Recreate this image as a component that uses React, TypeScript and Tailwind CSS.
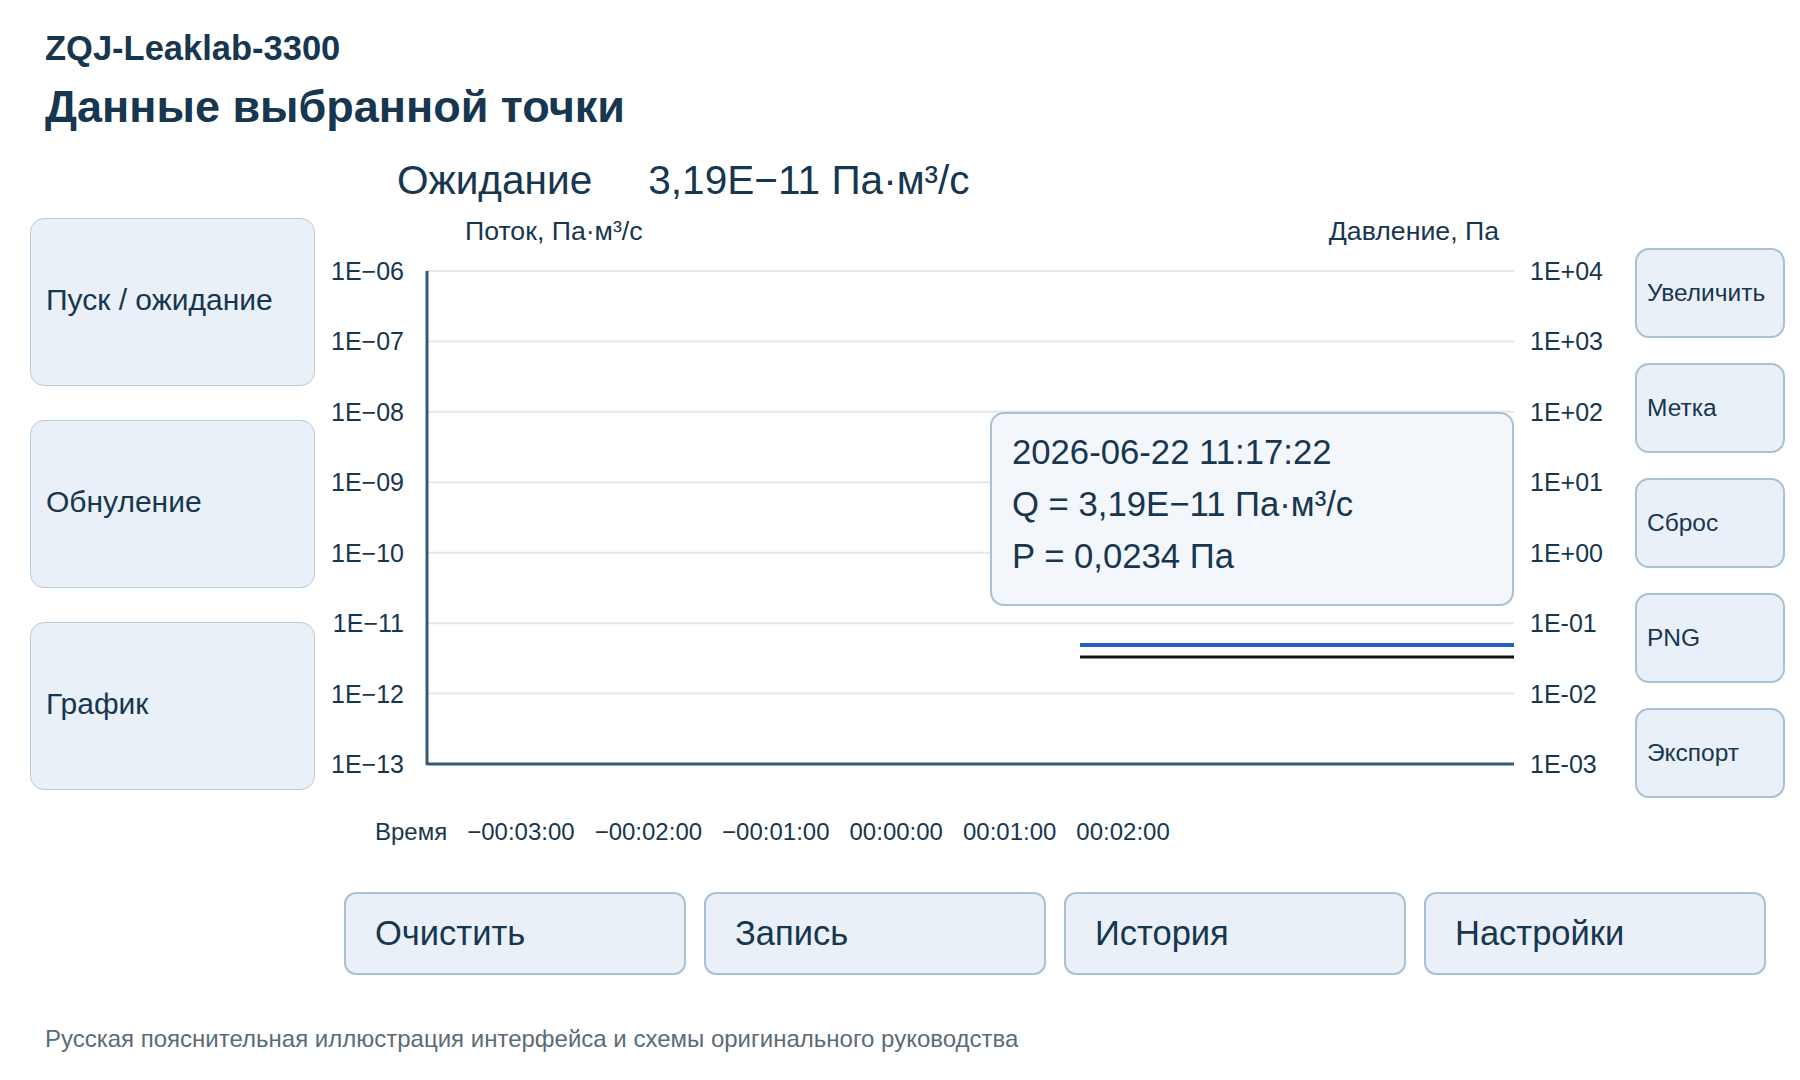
const leftTicks = ["1E−06", "1E−07", "1E−08", "1E−09", "1E−10", "1E−11", "1E−12", "1E−13"];
const rightTicks = ["1E+04", "1E+03", "1E+02", "1E+01", "1E+00", "1E-01", "1E-02", "1E-03"];
const timeTicks = ["−00:03:00", "−00:02:00", "−00:01:00", "00:00:00", "00:01:00", "00:02:00"];

const sideActions = ["Пуск / ожидание", "Обнуление", "График"];
const toolActions = ["Увеличить", "Метка", "Сброс", "PNG", "Экспорт"];
const bottomActions = ["Очистить", "Запись", "История", "Настройки"];

// plot box in px
const PLOT_W = 1087;
const PLOT_H = 493;

function Plot() {
  const step = PLOT_H / 7;
  return (
    <div className="relative w-[1087px] h-[493px] my-[12px]">
      <svg width={PLOT_W} height={PLOT_H} className="overflow-visible block">
        {Array.from({ length: 7 }).map((_, i) => (
          <line key={i} x1={0} x2={PLOT_W} y1={i * step} y2={i * step} stroke="#dfe7ef" strokeWidth={2} />
        ))}
        {/* pressure + flow traces */}
        <line x1={653} x2={PLOT_W} y1={374} y2={374} stroke="#2160c4" strokeWidth={4} />
        <line x1={653} x2={PLOT_W} y1={386} y2={386} stroke="#111111" strokeWidth={3} />
        {/* axes */}
        <line x1={0} x2={0} y1={0} y2={PLOT_H + 1} stroke="#375a75" strokeWidth={3} />
        <line x1={0} x2={PLOT_W} y1={PLOT_H} y2={PLOT_H} stroke="#375a75" strokeWidth={3} />
      </svg>
      <div className="absolute right-0 top-[141px] w-[524px] h-[194px] rounded-[14px] border-2 border-[#a9c1d4] bg-[#f3f7fb] pl-[20px] pt-[12px] text-[34.7px] leading-[52px]">
        <div>2026-06-22 11:17:22</div>
        <div>Q = 3,19E−11 Па·м³/с</div>
        <div>P = 0,0234 Па</div>
      </div>
    </div>
  );
}

export default function App() {
  return (
    <div className="w-[1800px] h-[1080px] bg-white text-[#17364f] font-['Liberation_Sans',Arial,sans-serif] overflow-hidden">
      <header className="pl-[45px] pt-[28px]">
        <div className="text-[34.5px] font-bold leading-[40px]">ZQJ-Leaklab-3300</div>
        <h1 className="mt-[12px] text-[45px] font-bold leading-[54px]">Данные выбранной точки</h1>
      </header>

      <div className="flex mt-[16px]">
        {/* left actions */}
        <div className="ml-[30px] w-[285px] pt-[68px] flex flex-col gap-[34px]">
          {sideActions.map((label) => (
            <button
              key={label}
              className="h-[168px] rounded-[14px] border-[1.5px] border-[#b7cbdb] bg-[#e9f0f7] pl-[15px] pb-[5px] text-left text-[30px] leading-none"
            >
              {label}
            </button>
          ))}
        </div>

        {/* chart */}
        <div className="w-[1320px]">
          <div className="pt-[6px] pl-[82px] flex gap-[56px] text-[40.6px] leading-[48px]">
            <span>Ожидание</span>
            <span>3,19E−11 Па·м³/с</span>
          </div>
          <div className="mt-[15px] pl-[150px] pr-[136px] flex justify-between text-[26.7px] leading-[24px]">
            <span>Поток, Па·м³/с</span>
            <span>Давление, Па</span>
          </div>
          <div className="mt-[16px] flex h-[517px]">
            <div className="w-[89px] flex flex-col justify-between text-right text-[25px] leading-[24px]">
              {leftTicks.map((t) => (
                <span key={t}>{t}</span>
              ))}
            </div>
            <div className="ml-[23px]">
              <Plot />
            </div>
            <div className="ml-[16px] w-[105px] flex flex-col justify-between text-[25px] leading-[24px]">
              {rightTicks.map((t) => (
                <span key={t}>{t}</span>
              ))}
            </div>
          </div>
          <div className="mt-[44px] pl-[60px] flex gap-[20px] text-[24px] leading-[24px]">
            <span>Время</span>
            {timeTicks.map((t) => (
              <span key={t}>{t}</span>
            ))}
          </div>
        </div>

        {/* right tools */}
        <div className="w-[150px] pt-[98px] flex flex-col gap-[25px]">
          {toolActions.map((label) => (
            <button
              key={label}
              className="h-[90px] rounded-[14px] border-2 border-[#a9c1d4] bg-[#e9f0f7] pl-[10px] text-left text-[24.5px] leading-none"
            >
              {label}
            </button>
          ))}
        </div>
      </div>

      <div className="mt-[48px] ml-[344px] flex gap-[18px]">
        {bottomActions.map((label) => (
          <button
            key={label}
            className="w-[342px] h-[83px] rounded-[12px] border-2 border-[#a9c1d4] bg-[#e9f0f7] pl-[29px] text-left text-[34.5px] leading-none"
          >
            {label}
          </button>
        ))}
      </div>

      <p className="mt-[50px] pl-[45px] text-[24px] leading-[28px] text-[#5a6b79]">
        Русская пояснительная иллюстрация интерфейса и схемы оригинального руководства
      </p>
    </div>
  );
}
